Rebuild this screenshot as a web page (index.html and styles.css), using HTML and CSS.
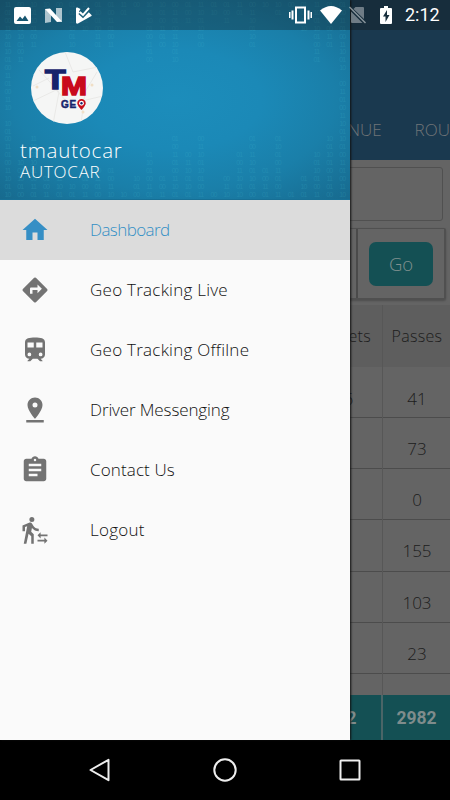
FILE: index.html
```html
<!DOCTYPE html>
<html lang="en">
<head>
<meta charset="utf-8">
<meta name="viewport" content="width=device-width">
<title>Dashboard</title>
<link rel="stylesheet" href="styles.css">
</head>
<body>
<div class="device">
  <main class="page">
    <header class="appbar"><nav class="tabs"><span>REVENUE</span><span>ROU</span></nav></header>
    <div class="field"></div>
    <div class="filter"><div class="filter-date"></div><div class="filter-action"><button class="go">Go</button></div></div>
    <div class="table">
      <div class="row head"><div>Tickets</div><div>Passes</div></div>
      <div class="row first"><div>86</div><div>41</div></div>
      <div class="row"><div></div><div>73</div></div>
      <div class="row"><div></div><div>0</div></div>
      <div class="row"><div></div><div>155</div></div>
      <div class="row"><div></div><div>103</div></div>
      <div class="row"><div></div><div>23</div></div>
      <div class="row rest"><div></div><div></div></div>
      <div class="row total"><div>3502</div><div>2982</div></div>
    </div>
  </main>

  <aside class="drawer">
    <header class="profile">
      <div class="digits" id="digits" aria-hidden="true"></div>
      <div class="identity">
        <div class="avatar">
          <svg class="map" viewBox="0 0 72 72"><g fill="none" stroke="#e9e9e7" stroke-width="1"><path d="M0 50L25 38 38 52 72 44M8 18L28 40 22 72M34 0L42 20 72 14M50 72L54 40 66 20M2 34L18 26"/></g><g fill="#f0dfc6"><circle cx="6" cy="35" r="1.5"/><circle cx="61" cy="33" r="1.5"/><circle cx="52" cy="60" r="1.5"/></g></svg>
          <div class="logo"><span class="logo-t">T</span><span class="logo-m">M</span></div>
          <div class="logo-geo"><span>GE</span><svg viewBox="0 0 10 12"><path d="M5 0a4.700 4.700 0 0 0-4.700 4.700C.3 7.500 5 12 5 12s4.700-4.500 4.700-7.300A4.700 4.700 0 0 0 5 0z" fill="#c8101c"/><circle cx="5" cy="4.600" r="2.700" fill="#fff"/><circle cx="5" cy="4.600" r="1.300" fill="#17246c"/></svg></div>
        </div>
        <div class="name">tmautocar</div>
        <div class="org">AUTOCAR</div>
      </div>
    </header>
    <nav class="menu">
      <a class="item active"><svg viewBox="0 0 24 24"><path d="M10 20v-6h4v6h5v-8h3L12 3 2 12h3v8z"/></svg><span class="tight">Dashboard</span></a>
      <a class="item"><svg viewBox="0 0 24 24"><path d="M21.710 11.290l-9-9a1 1 0 0 0-1.410 0l-9 9a1 1 0 0 0 0 1.410l9 9c.39.39 1.020.39 1.410 0l9-9a1 1 0 0 0 0-1.410zM14 14.500V12h-4v3H8v-4c0-.55.45-1 1-1h5V7.500l3.500 3.500-3.500 3.500z"/></svg><span class="wide">Geo Tracking Live</span></a>
      <a class="item"><svg viewBox="0 0 24 24"><path d="M12 2c-4.420 0-8 .5-8 4v9.500C4 17.430 5.570 19 7.500 19L6 20.500v.5h2.230l2-2H14l2 2h2v-.5L16.500 19c1.930 0 3.500-1.570 3.500-3.500V6c0-3.500-3.580-4-8-4zM7.500 17a1.500 1.500 0 1 1 0-3 1.500 1.500 0 0 1 0 3zm3.500-7H6V6h5v4zm2 0V6h5v4h-5zm3.500 7a1.500 1.500 0 1 1 0-3 1.500 1.500 0 0 1 0 3z"/></svg><span class="wide">Geo Tracking Offilne</span></a>
      <a class="item"><svg viewBox="0 0 24 24"><path d="M18 8c0-3.310-2.690-6-6-6S6 4.690 6 8c0 4.500 6 11 6 11s6-6.500 6-11zm-8 0a2 2 0 1 1 4 0 2 2 0 0 1-4 0zM5 20v2h14v-2H5z"/></svg><span class="snug">Driver Messenging</span></a>
      <a class="item"><svg viewBox="0 0 24 24"><path d="M19 3h-4.180C14.400 1.840 13.300 1 12 1s-2.400.84-2.820 2H5c-1.100 0-2 .9-2 2v14c0 1.100.9 2 2 2h14c1.100 0 2-.9 2-2V5c0-1.100-.9-2-2-2zm-7 0a1 1 0 1 1 0 2 1 1 0 0 1 0-2zm2 14H7v-2h7v2zm3-4H7v-2h10v2zm0-4H7V7h10v2z"/></svg><span class="open">Contact Us</span></a>
      <a class="item"><svg viewBox="0 0 24 24"><path d="M16.490 15.500v-1.750L14 16.250l2.490 2.500V17H22v-1.500zM19.510 19.750H14v1.500h5.510V23L22 20.500 19.510 18zM9.500 5.500a2 2 0 1 0 0-4 2 2 0 0 0 0 4zM5.750 8.900L3 23h2.100l1.750-8L9 17v6h2v-7.550L8.950 13.400l.6-3C10.850 12 12.800 13 15 13v-2c-1.850 0-3.450-1-4.350-2.450l-.95-1.600C9.350 6.350 8.700 6 8 6c-.25 0-.5.050-.75.150L2 8.300V13h2V9.650l1.750-.75"/></svg><span class="wide">Logout</span></a>
    </nav>
  </aside>

  <div class="statusbar">
    <div class="notifications">
      <svg width="17" height="17" viewBox="0 0 17 17"><path fill-rule="evenodd" d="M2 0h13q2 0 2 2v13q0 2-2 2H2q-2 0-2-2V2q0-2 2-2zM2.500 14h12L11 8.500 8.400 12 6 9.500z"/></svg>
      <svg width="19" height="15" viewBox="0 0 19 15"><path d="M1 1l6 .2V14l-6 1zM12 0h6v14l-6-1z" opacity=".65"/><path d="M1 1l5-.5 12 13L13 14z"/></svg>
      <svg width="16" height="17" viewBox="0 0 16 17"><path d="M0 1.500Q0 0 1.500.5l3 1.500L3 4.500 7 10l5.500-5 3 3q.5.700-.5 1.300L2 16.500q-2 .6-2-1z"/><path d="M3.800 5L7 8l6-7" fill="none" stroke="#fff" stroke-width="2"/><path d="M2.800 6.500L7 10.300 13 4" fill="none" stroke="#195d78" stroke-width="1.200"/></svg>
    </div>
    <div class="system">
      <svg width="23" height="18" viewBox="0 0 23 18"><path fill="none" stroke="#fff" stroke-width="2" d="M7 1.500h9v15H7zM3.500 4.500v9M19.500 4.500v9"/><path d="M0 6h1.500v6H0zM21.500 6H23v6h-1.500z"/></svg>
      <svg class="wifi" width="22" height="18" viewBox="0 0 22 18"><path d="M0 4.500Q11-4.500 22 4.500L11 18z"/></svg>
      <svg class="sim" width="17" height="18" viewBox="0 0 17 18"><path opacity=".38" d="M6.500 1H14q1 0 1 1v11L4.500 3zM2 5.500L13.500 17H3q-1 0-1-1z"/><path opacity=".5" d="M0 1.500L1 .5l16 16-1 1z"/></svg>
      <svg class="battery" width="12" height="18" viewBox="0 0 12 18"><path fill-rule="evenodd" d="M4 0h4v2h3q1 0 1 1v14q0 1-1 1H1q-1 0-1-1V3q0-1 1-1h3zM7 4L3 10.500h2.500V16l4-7H7z"/></svg>
      <span class="clock">2:12</span>
    </div>
  </div>

  <footer class="navbar">
    <svg viewBox="0 0 26 26"><path d="M21.500 2.800v20.400L3.500 13z"/></svg>
    <svg viewBox="0 0 26 26"><circle cx="13" cy="13" r="10.700"/></svg>
    <svg viewBox="0 0 26 26"><rect x="3.500" y="3.500" width="19" height="19" rx=".5"/></svg>
  </footer>
</div>
<script src="digits.js"></script>
</body>
</html>
```
FILE: styles.css
```css
* { box-sizing: border-box; }
body { margin: 0; font-family: "Open Sans", "Noto Sans", sans-serif; font-weight: 350; }
.device { position: relative; display: flex; flex-direction: column; width: 450px; height: 800px; overflow: hidden; background: #000; }
.page { height: 740px; background: #646464; color: #1c1c1c; overflow: hidden; }
.appbar { height: 160px; padding-top: 115px; background: #1a394f; }
.tabs { display: flex; gap: 33px; padding-left: 309px; font-size: 17px; line-height: 30px; color: #707477; white-space: nowrap; }
.field { height: 54px; margin: 7px 7px 0 8px; border: 1px solid #505050; border-radius: 3px; }
.filter { display: flex; height: 72px; margin: 7px 4px 0 8px; border: 1px solid #505050; border-width: 1px 2px 2px 1px; border-radius: 2px; box-shadow: 0 1px 2px #4e4e4e; }
.filter-date { flex: 1; border-right: 2px solid #4a4a4a; }
.filter-action { width: 86px; padding: 13px 10px 0 11px; }
.go { display: block; width: 64px; height: 44px; padding: 0 0 2px; border: 0; border-radius: 7px; background: #145054; color: #80908f; font: 340 18.500px "Open Sans", sans-serif; }
.table { margin-top: 5px; }
.row { display: grid; grid-template-columns: 305px 78px 67px; height: 51.200px; border-bottom: 1.500px solid #4c4c4c; font-size: 17px; line-height: 62px; text-align: center; }
.row > :first-child { grid-column: 2; border-right: 1px solid #575757; }
.row > :last-child { padding-left: 1px; }
.row.head { height: 62px; background: #5e5e5e; border: 0; line-height: 62px; font-size: 16px; letter-spacing: .3px; }
.row.head > :first-child { padding-left: 4px; }
.row.first { height: 51px; line-height: 63px; }
.row.rest { height: 21px; border: 0; }
.row.total { height: 45px; border: 0; background: #145054; color: #7f8c8c; font: 700 17.500px/46px Roboto, sans-serif; }
.row.total > :first-child { border-right: 2px solid #4b6567; padding-right: 13px; }
.row.total > :last-child { padding-left: 0; }
.drawer { position: absolute; left: 0; top: 0; width: 350px; height: 740px; background: #fafafa; box-shadow: 1px 0 2px #111; }
.profile { position: relative; height: 200px; border-bottom: 1px solid #176f95; background: radial-gradient(ellipse at 50% 50%, #1c8dbb 0, #1b89b7 35%, #1a7fa9 65%, #176a8e 100%); overflow: hidden; }
.digits { position: absolute; inset: 1px 0 0 1px; display: flex; color: #4fc6d8; opacity: .17; font: 7px/7.900px "Liberation Sans", sans-serif; }
.digits pre { width: 12.880px; margin: 0; font: inherit; letter-spacing: -.9px; text-align: center; }
.identity { position: relative; padding: 52px 0 0 20px; color: #fff; }
.avatar { position: relative; width: 72px; height: 72px; margin-left: 11px; padding-top: 14px; border-radius: 50%; background: #f5f6f5; overflow: hidden; font-family: "Liberation Sans", sans-serif; font-weight: 700; }
.map { position: absolute; inset: 0; }
.logo { position: relative; display: flex; height: 32px; padding-left: 14px; }
.logo-t { width: 16px; font-size: 27px; line-height: 28px; color: #17246c; -webkit-text-stroke: 1.500px #17246c; transform: scaleX(1.250); transform-origin: left; }
.logo-m { font-size: 26px; line-height: 40px; color: #c90a1c; -webkit-text-stroke: 1.500px #c90a1c; transform: scaleX(1.200); transform-origin: left; }
.logo-geo { position: relative; display: flex; align-items: center; padding-left: 30px; height: 12px; font-size: 10px; color: #17246c; -webkit-text-stroke: .5px #17246c; }
.logo-geo span { letter-spacing: .7px; }
.logo-geo svg { width: 9px; height: 11px; }
.name { margin-top: 13px; font-size: 20.500px; line-height: 26px; letter-spacing: .8px; }
.org { font-size: 17px; line-height: 17px; letter-spacing: .75px; }
.item { display: flex; align-items: center; height: 60px; padding-left: 20px; gap: 40px; color: #111; font-size: 17px; white-space: nowrap; }
.item span { padding-bottom: 2px; }
.tight { letter-spacing: -.58px; }
.wide { letter-spacing: .25px; }
.snug { letter-spacing: -.12px; }
.open { letter-spacing: .13px; }
.item svg { width: 30px; height: 30px; fill: #737373; }
.item.active { background: #dcdcdc; color: #338fc5; }
.item.active svg { fill: #368fc5; }
.statusbar { position: absolute; left: 0; top: 0; width: 450px; height: 30px; padding: 0 9px 0 14px; display: flex; justify-content: space-between; background: rgba(18, 22, 23, .32); color: #fff; }
.statusbar svg { fill: #fff; flex: none; }
.notifications, .system { display: flex; align-items: center; }
.notifications { gap: 13px; }
.wifi { margin-left: 8px; }
.sim { margin-left: 7px; }
.battery { margin-left: 14px; }
.clock { width: 36px; margin-left: 13px; font: 450 18px/32px Roboto, sans-serif; white-space: nowrap; }
.navbar { display: flex; align-items: center; justify-content: space-between; height: 60px; padding: 0 87px; background: #000; }
.navbar svg { width: 26px; height: 26px; fill: none; stroke: #eee; stroke-width: 2; stroke-linejoin: round; }
```
FILE: digits.js
```js
// Faint columns of binary pairs hang from the top and rise from the bottom of the header.
const rows = 25;
const hanging = [14, 8, 6, 2, 2, 6, 4, 6, 6, 2, 1, 8, 6, 8, 3, 6, 2, 3, 2, 6, 1, 2, 2, 4, 8, 6, 9];
const rising = [10, 5, 8, 3, 3, 2, 3, 4, 4, 1, 3, 6, 3, 8, 6, 8, 1, 3, 6, 8, 4, 8, 1, 3, 6, 8, 15];
const pairs = ["11", "01", "00", "11", "10", "01", "10", "01", "00"];
const host = document.getElementById("digits");
hanging.forEach((count, c) => {
  const column = document.createElement("pre");
  const lines = [];
  for (let r = 0; r < rows; r++) {
    const shown = r < count || r >= rows - rising[c];
    lines.push(shown ? pairs[(r + c * 2) % pairs.length] : " ");
  }
  column.textContent = lines.join("\n");
  host.append(column);
});
```
